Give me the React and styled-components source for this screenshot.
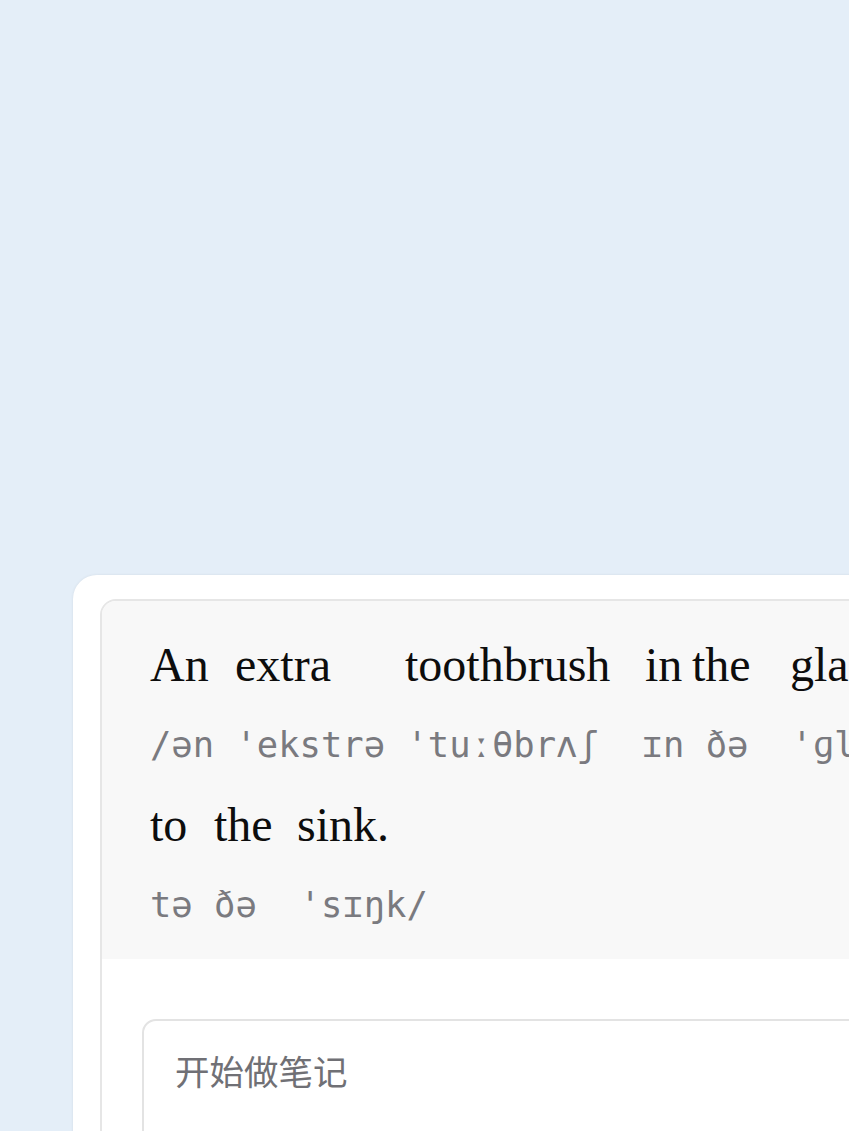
import styled, { createGlobalStyle } from "styled-components";

const GlobalStyle = createGlobalStyle`
  html, body {
    margin: 0;
    padding: 0;
    background: #e4eef8;
    overflow: hidden;
  }
`;

const Page = styled.main`
  width: 1400px;
  min-height: 1131px;
  padding: 575px 0 0 73px;
  box-sizing: border-box;
`;

const Card = styled.section`
  width: 1200px;
  background: #fff;
  border-radius: 24px;
  padding: 24px 27px;
  box-shadow: 0 0 3px rgba(0, 0, 0, 0.08);
`;

const Panel = styled.div`
  border: 2px solid #e6e6e6;
  border-radius: 16px;
  overflow: hidden;
`;

const Sentence = styled.div`
  background: #f8f8f8;
  padding: 23px 48px 15px;
`;

const WordRow = styled.div`
  display: flex;
  height: 80px;
  align-items: center;
  font-family: "Liberation Serif", "Times New Roman", serif;
  font-size: 48px;
  color: #0d0d0d;
  white-space: nowrap;
`;

const Word = styled.span`
  display: inline-block;
  width: ${(p) => (p.$w ? `${p.$w}px` : "auto")};
`;

const IpaRow = styled.div`
  height: 80px;
  display: flex;
  align-items: center;
  font-family: "DejaVu Sans Mono", "Liberation Mono", monospace;
  font-size: 35.5px;
  color: #7a7a7f;
  white-space: pre;
`;

const Notes = styled.div`
  padding: 60px 40px 40px;
`;

const NoteBox = styled.div`
  border: 2px solid #e3e3e3;
  border-radius: 14px;
  height: 200px;
  padding: 24px 31px;
  font-family: "Noto Sans CJK SC", "Noto Sans", sans-serif;
  font-size: 34.5px;
  color: #707075;
`;

const lines = [
  {
    words: [
      ["An", 85],
      ["extra", 170],
      ["toothbrush", 240],
      ["in", 47],
      ["the", 98],
      ["glass", 140],
      ["next", 0],
    ],
    ipa: "/ən 'ekstrə 'tuːθbrʌʃ  ɪn ðə  'ɡlɑːs  nekst",
  },
  {
    words: [
      ["to", 64],
      ["the", 83],
      ["sink.", 0],
    ],
    ipa: "tə ðə  'sɪŋk/",
  },
];

export default function App() {
  return (
    <>
      <GlobalStyle />
      <Page>
        <Card>
          <Panel>
            <Sentence>
              {lines.map((line, i) => (
                <div key={i}>
                  <WordRow>
                    {line.words.map(([w, width], j) => (
                      <Word key={j} $w={width}>
                        {w}
                      </Word>
                    ))}
                  </WordRow>
                  <IpaRow>{line.ipa}</IpaRow>
                </div>
              ))}
            </Sentence>
            <Notes>
              <NoteBox>开始做笔记</NoteBox>
            </Notes>
          </Panel>
        </Card>
      </Page>
    </>
  );
}
